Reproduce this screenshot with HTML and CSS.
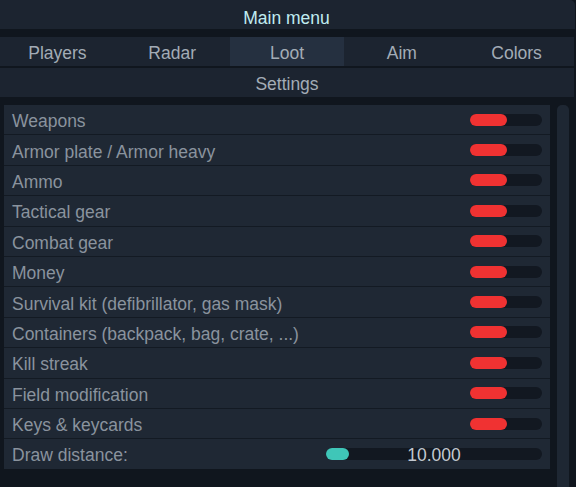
FILE: index.html
```html
<!DOCTYPE html>
<html>
<head>
<meta charset="utf-8">
<link rel="stylesheet" href="styles.css">
</head>
<body>
<div class="window">
  <div class="titlebar">Main menu</div>
  <div class="tabs">
    <div class="tab">Players</div>
    <div class="tab">Radar</div>
    <div class="tab active">Loot</div>
    <div class="tab">Aim</div>
    <div class="tab">Colors</div>
  </div>
  <div class="subtab">Settings</div>
  <div class="content">
    <div class="list">
      <div class="row"><span class="label">Weapons</span><div class="slider"><div class="fill"></div></div></div>
      <div class="row"><span class="label">Armor plate / Armor heavy</span><div class="slider"><div class="fill"></div></div></div>
      <div class="row"><span class="label">Ammo</span><div class="slider"><div class="fill"></div></div></div>
      <div class="row"><span class="label">Tactical gear</span><div class="slider"><div class="fill"></div></div></div>
      <div class="row"><span class="label">Combat gear</span><div class="slider"><div class="fill"></div></div></div>
      <div class="row"><span class="label">Money</span><div class="slider"><div class="fill"></div></div></div>
      <div class="row"><span class="label">Survival kit (defibrillator, gas mask)</span><div class="slider"><div class="fill"></div></div></div>
      <div class="row"><span class="label">Containers (backpack, bag, crate, ...)</span><div class="slider"><div class="fill"></div></div></div>
      <div class="row"><span class="label">Kill streak</span><div class="slider"><div class="fill"></div></div></div>
      <div class="row"><span class="label">Field modification</span><div class="slider"><div class="fill"></div></div></div>
      <div class="row"><span class="label">Keys &amp; keycards</span><div class="slider"><div class="fill"></div></div></div>
      <div class="row"><span class="label">Draw distance:</span><div class="slider wide"><div class="fill teal"></div><span class="value">10.000</span></div></div>
    </div>
    <div class="scrollbar"></div>
  </div>
</div>
</body>
</html>
```

FILE: styles.css
```css
html, body {
  margin: 0;
  padding: 0;
  background: #10161e;
  height: 100%;
  overflow: hidden;
}

body {
  font-family: "Liberation Sans", Arial, sans-serif;
  font-size: 17.5px;
}

.window {
  display: flex;
  flex-direction: column;
  width: 576px;
}

.titlebar {
  width: 575px;
  height: 29px;
  box-sizing: border-box;
  background: #1c2430;
  border-top-right-radius: 5px;
  color: #c0ecf0;
  display: flex;
  align-items: center;
  justify-content: center;
  padding: 7px 2px 0 0;
}

.tabs {
  margin-top: 8px;
  width: 574px;
  height: 29px;
  display: grid;
  grid-template-columns: repeat(5, 1fr);
  background: #1c2430;
}

.tab {
  display: flex;
  align-items: center;
  justify-content: center;
  color: #a3acb6;
  padding-top: 4px;
}

.tab.active {
  background: #253040;
}

.subtab {
  margin-top: 2px;
  width: 574px;
  height: 29px;
  box-sizing: border-box;
  padding-top: 3px;
  background: #1c2430;
  color: #a3acb6;
  display: flex;
  align-items: center;
  justify-content: center;
}

.content {
  margin-top: 8px;
  display: flex;
  align-items: flex-start;
  padding-left: 4px;
  gap: 7px;
}

.list {
  width: 546px;
  display: flex;
  flex-direction: column;
  gap: 1px;
  background: #131a23;
}

.row {
  height: 29.4px;
  box-sizing: border-box;
  background: #1f2834;
  display: flex;
  align-items: center;
  justify-content: space-between;
  padding: 0 8px 0 8px;
  color: #8a939e;
}

.label {
  white-space: nowrap;
  position: relative;
  top: 2px;
}

.slider {
  position: relative;
  width: 72px;
  height: 12px;
  border-radius: 6px;
  background: #121821;
}

.slider.wide {
  width: 216px;
}

.fill {
  width: 37px;
  height: 12px;
  border-radius: 6px;
  background: #f03232;
}

.fill.teal {
  width: 23px;
  background: #3fc6b8;
}

.value {
  position: absolute;
  left: 0;
  right: 0;
  top: -2px;
  text-align: center;
  color: #c2c8d0;
  line-height: 18px;
}

.scrollbar {
  width: 12px;
  height: 400px;
  background: #1e2733;
  border-radius: 5px 5px 0 0;
}
```
